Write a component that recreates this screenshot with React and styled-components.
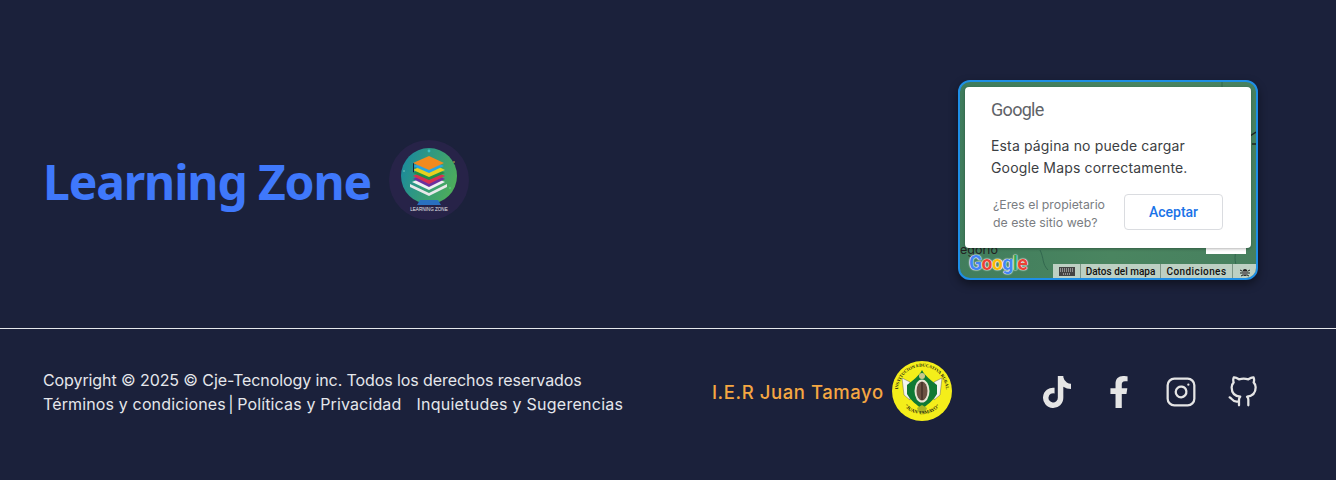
//App.jsx
import React from "react";
import styled, { createGlobalStyle } from "styled-components";
import { FaTiktok, FaFacebookF } from "react-icons/fa";
import { FiInstagram, FiGithub } from "react-icons/fi";

const GlobalStyle = createGlobalStyle`
  html, body { margin: 0; padding: 0; background: #1b213b; }
  * { box-sizing: border-box; }
`;

const Footer = styled.footer`
  width: 1336px;
  height: 480px;
  background: #1b213b;
  font-family: "Inter", "Liberation Sans", sans-serif;
  color: #e5e7eb;
  display: flex;
  flex-direction: column;
`;

const TopRow = styled.div`
  height: 329px;
  padding: 80px 78px 0 44px;
  border-bottom: 1px solid #e5e7eb;
  display: flex;
  justify-content: space-between;
  align-items: flex-start;
`;

const Brand = styled.div`
  display: flex;
  align-items: center;
  gap: 18px;
  height: 200px;
`;

const BrandName = styled.h1`
  margin: 4px 0 0 -1px;
  font-family: "Noto Sans", sans-serif;
  font-size: 48px;
  font-weight: 700;
  letter-spacing: -1.15px;
  color: #3f78fb;
  line-height: 60px;
`;

const MapCard = styled.div`
  position: relative;
  width: 300px;
  height: 200px;
  border: 2px solid #1e8fe6;
  border-radius: 12px;
  overflow: hidden;
  background: linear-gradient(100deg, #3f7c5c, #4a8560 55%, #47805f);
  box-shadow: 0 4px 10px rgba(0, 0, 0, 0.45);
  font-family: "Inter", "Liberation Sans", sans-serif;
`;

const MapLines = styled.svg`
  position: absolute;
  inset: 0;
`;

const MapLabel = styled.span`
  position: absolute;
  left: 0;
  top: 161px;
  font-size: 12.5px;
  line-height: 14px;
  color: #222;
`;

const MapPatch = styled.div`
  position: absolute;
  left: 246px;
  top: 164px;
  width: 40px;
  height: 8px;
  background: #fff;
`;

const Dialog = styled.div`
  position: absolute;
  left: 5px;
  top: 5px;
  width: 286px;
  height: 161px;
  padding: 13px 28px 0 26px;
  background: #fff;
  border-radius: 4px;
  box-shadow: 0 1px 3px rgba(0, 0, 0, 0.3);
`;

const GoogleGrey = styled.div`
  font-family: "Roboto", sans-serif;
  font-size: 18px;
  line-height: 19px;
  letter-spacing: -0.7px;
  color: #5f6368;
`;

const DialogText = styled.p`
  margin: 16px 0 0;
  font-size: 14px;
  line-height: 22px;
  letter-spacing: 0.15px;
  color: #3c4043;
`;

const DialogFoot = styled.div`
  margin-top: 15px;
  padding-left: 2px;
  display: flex;
  justify-content: space-between;
  align-items: flex-start;
`;

const OwnerText = styled.p`
  margin: 0;
  padding-top: 2px;
  font-size: 12.3px;
  line-height: 18px;
  color: #7a7d82;
`;

const AcceptButton = styled.button`
  width: 99px;
  height: 36px;
  background: #fff;
  border: 1px solid #dadce0;
  border-radius: 4px;
  font-family: "Roboto", sans-serif;
  font-size: 14px;
  font-weight: 500;
  color: #1a73e8;
`;

const GoogleMark = styled.div`
  position: absolute;
  left: 9px;
  bottom: 3px;
  font-family: "Roboto", sans-serif;
  font-size: 19.5px;
  font-weight: 700;
  line-height: 22px;
  letter-spacing: -0.7px;
  text-shadow: 0 0 2px #fff, 0 0 1px #fff, 0 0 1px #fff;
`;

const GLetter = styled.span`
  color: ${(p) => p.$c};
`;

const Attribution = styled.div`
  position: absolute;
  right: 0;
  bottom: 0;
  height: 14px;
  display: flex;
  background: #bdd0c3;
  font-family: "Roboto", sans-serif;
  font-size: 10px;
  font-weight: 500;
  line-height: 14px;
  color: #111;
`;

const AttrItem = styled.span`
  width: ${(p) => p.$w}px;
  padding-top: 1px;
  letter-spacing: ${(p) => p.$track || 0}px;
  border-left: ${(p) => (p.$first ? "none" : "1px solid #7d9687")};
  display: flex;
  align-items: center;
  justify-content: center;
`;

const BottomRow = styled.div`
  flex: 1;
  padding: 32px 77px 0 43px;
  display: flex;
  align-items: flex-start;
`;

const Legal = styled.div`
  width: 669px;
  font-size: 16px;
  line-height: 24px;
  padding-top: 7px;
  color: #e5e7eb;
`;

const LegalLine = styled.div`
  letter-spacing: ${(p) => p.$track}px;
  white-space: nowrap;
`;

const LegalLink = styled.a`
  margin-left: ${(p) => p.$gap || 0}px;
  letter-spacing: ${(p) => p.$track || 0.14}px;
`;

const Pipe = styled.span`
  margin-left: -2px;
`;

const School = styled.div`
  display: flex;
  align-items: center;
  gap: 8px;
  height: 60px;
`;

const SchoolName = styled.span`
  margin-top: 1px;
  font-size: 18.5px;
  font-weight: 500;
  letter-spacing: 0.57px;
  color: #f5a742;
`;

const Socials = styled.div`
  margin-left: auto;
  display: flex;
  align-items: center;
  gap: 30px;
  height: 62px;
  color: #e5e5e5;
`;

const LearningLogo = () => (
  <svg width="80" height="80" viewBox="0 0 80 80" aria-hidden="true">
    <defs>
      <linearGradient id="globe" x1="0" y1="0.3" x2="1" y2="0.7">
        <stop offset="0" stopColor="#1b8a9c" />
        <stop offset="1" stopColor="#4fae58" />
      </linearGradient>
    </defs>
    <circle cx="40" cy="40" r="40" fill="#272348" />
    <circle cx="40" cy="36" r="28" fill="url(#globe)" />
    <path d="M21 44l19 9 18-9v3l-18 9-19-9z" fill="#e8e8ea" />
    <path d="M23 42l17 8 16-8-16-7z" fill="#f0f0f2" />
    <path d="M24 39l16 8 16-8-16-8z" fill="#6b2f9e" />
    <path d="M24 36l16 8 16-8-16-8z" fill="#d8304f" />
    <path d="M24 33l16 7 16-7-16-8z" fill="#1f8f48" />
    <path d="M24 30l16 7 16-7-16-8z" fill="#e8d020" />
    <path d="M24 26l16 7 15-7-15-7z" fill="#28a5e0" />
    <path d="M24 23l16 7 15-7-15-7z" fill="#f28a1e" />
    <path d="M24 23v9l1 .5v-9z" fill="#17203a" />
    <circle cx="40" cy="11" r="1.4" fill="#3cc0c8" />
    <circle cx="15" cy="31" r="0.8" fill="#7fd0c0" />
    <circle cx="65" cy="22" r="0.8" fill="#d8c840" />
    <circle cx="61" cy="48" r="1" fill="#4fd070" />
    <path d="M28 65l3-5h18l3 5z" fill="#2a70c0" />
    <text x="40" y="70.5" textAnchor="middle" fontFamily="Liberation Sans, sans-serif" fontSize="4.6" fill="#e8e8ea">LEARNING ZONE</text>
  </svg>
);

const SchoolLogo = () => (
  <svg width="60" height="60" viewBox="0 0 60 60" aria-hidden="true">
    <circle cx="30" cy="30" r="30" fill="#f4ee1a" />
    <path d="M10 17l8 4v18l-6-5zM50 17l-8 4v18l6-5z" fill="#f5f5f0" stroke="#444" strokeWidth="0.4" />
    <path d="M30 9c3 6 9 10 15 15v9c-4 7-10 11-15 15-5-4-11-8-15-15v-9c6-5 12-9 15-15z" fill="#0f7a34" />
    <ellipse cx="30" cy="30" rx="7.5" ry="11.5" fill="#e8e6d4" />
    <ellipse cx="30" cy="30" rx="5.5" ry="9.5" fill="#6b5142" />
    <path d="M30 21v18" stroke="#2e2018" strokeWidth="1" />
    <circle cx="30" cy="15" r="3" fill="#c9c78a" />
    <path d="M25 47l5-3 5 3-2 5h-6z" fill="#a9b526" />
    <defs>
      <path id="schoolTop" d="M7.5 38a24 24 0 1 1 45 0" />
      <path id="schoolBottom" d="M10 42a23.5 23.5 0 0 0 40 0" />
    </defs>
    <text fontFamily="Liberation Serif, serif" fontWeight="700" fontSize="4.4" fill="#1a1a10">
      <textPath href="#schoolTop" startOffset="50%" textAnchor="middle">INSTITUCION EDUCATIVA RURAL</textPath>
    </text>
    <text fontFamily="Liberation Serif, serif" fontWeight="700" fontSize="4.8" fill="#1a1a10">
      <textPath href="#schoolBottom" startOffset="50%" textAnchor="middle">"JUAN TAMAYO"</textPath>
    </text>
  </svg>
);

const KeyboardIcon = () => (
  <svg width="16" height="9" viewBox="0 0 16 9" aria-hidden="true">
    <path fill="#444" d="M0 0h16v9H0z" />
    <path stroke="#ddd" strokeWidth="1" strokeDasharray="1 1" d="M1 2h14M1 4h14M4 7h8" />
  </svg>
);

const BugIcon = () => (
  <svg width="10" height="10" viewBox="0 0 10 10" aria-hidden="true">
    <ellipse cx="5" cy="5.5" rx="2.6" ry="3.5" fill="#222" />
    <path stroke="#222" strokeWidth="1" d="M0 3l2 1M10 3L8 4M0 6h2M10 6H8M1 9l2-1M9 9L7 8" />
    <path stroke="#ddd" strokeWidth="0.8" d="M3 5h4M3 7h4" />
  </svg>
);

const App = () => {
  return (
    <>
      <GlobalStyle />
      <Footer>
        <TopRow>
          <Brand>
            <BrandName>Learning Zone</BrandName>
            <LearningLogo />
          </Brand>
          <MapCard>
            <MapLines width="296" height="196" viewBox="0 0 296 196" fill="none">
              <path d="M80 168c4 8 2 14 8 20M276 170c-3 8 2 14 0 24" stroke="#33684f" strokeWidth="1" />
              <path d="M262 0v6" stroke="#33684f" strokeWidth="1" />
              <path d="M290 54l6-4M292 62h4" stroke="#222" strokeWidth="1.5" />
            </MapLines>
            <MapLabel>egorio</MapLabel>
            <MapPatch />
            <GoogleMark>
              <GLetter $c="#4285f4">G</GLetter>
              <GLetter $c="#ea4335">o</GLetter>
              <GLetter $c="#fbbc05">o</GLetter>
              <GLetter $c="#4285f4">g</GLetter>
              <GLetter $c="#34a853">l</GLetter>
              <GLetter $c="#ea4335">e</GLetter>
            </GoogleMark>
            <Attribution>
              <AttrItem $first $w={27}><KeyboardIcon /></AttrItem>
              <AttrItem $w={80}>Datos del mapa</AttrItem>
              <AttrItem $w={72} $track={0.4}>Condiciones</AttrItem>
              <AttrItem $w={24}><BugIcon /></AttrItem>
            </Attribution>
            <Dialog>
              <GoogleGrey>Google</GoogleGrey>
              <DialogText>
                Esta página no puede cargar
                <br />
                Google Maps correctamente.
              </DialogText>
              <DialogFoot>
                <OwnerText>
                  ¿Eres el propietario
                  <br />
                  de este sitio web?
                </OwnerText>
                <AcceptButton>Aceptar</AcceptButton>
              </DialogFoot>
            </Dialog>
          </MapCard>
        </TopRow>
        <BottomRow>
          <Legal>
            <LegalLine $track={-0.09}>Copyright © 2025 © Cje-Tecnology inc. Todos los derechos reservados</LegalLine>
            <LegalLine $track={0}>
              <LegalLink>Términos y condiciones</LegalLink> <Pipe>|</Pipe> <LegalLink $gap={-1}>Políticas y Privacidad</LegalLink>
              <LegalLink $gap={15} $track={0.26}>Inquietudes y Sugerencias</LegalLink>
            </LegalLine>
          </Legal>
          <School>
            <SchoolName>I.E.R Juan Tamayo</SchoolName>
            <SchoolLogo />
          </School>
          <Socials>
            <FaTiktok size={32} />
            <FaFacebookF size={32} />
            <FiInstagram size={32} strokeWidth={1.7} />
            <FiGithub size={32} strokeWidth={1.7} />
          </Socials>
        </BottomRow>
      </Footer>
    </>
  );
};

export default App;
